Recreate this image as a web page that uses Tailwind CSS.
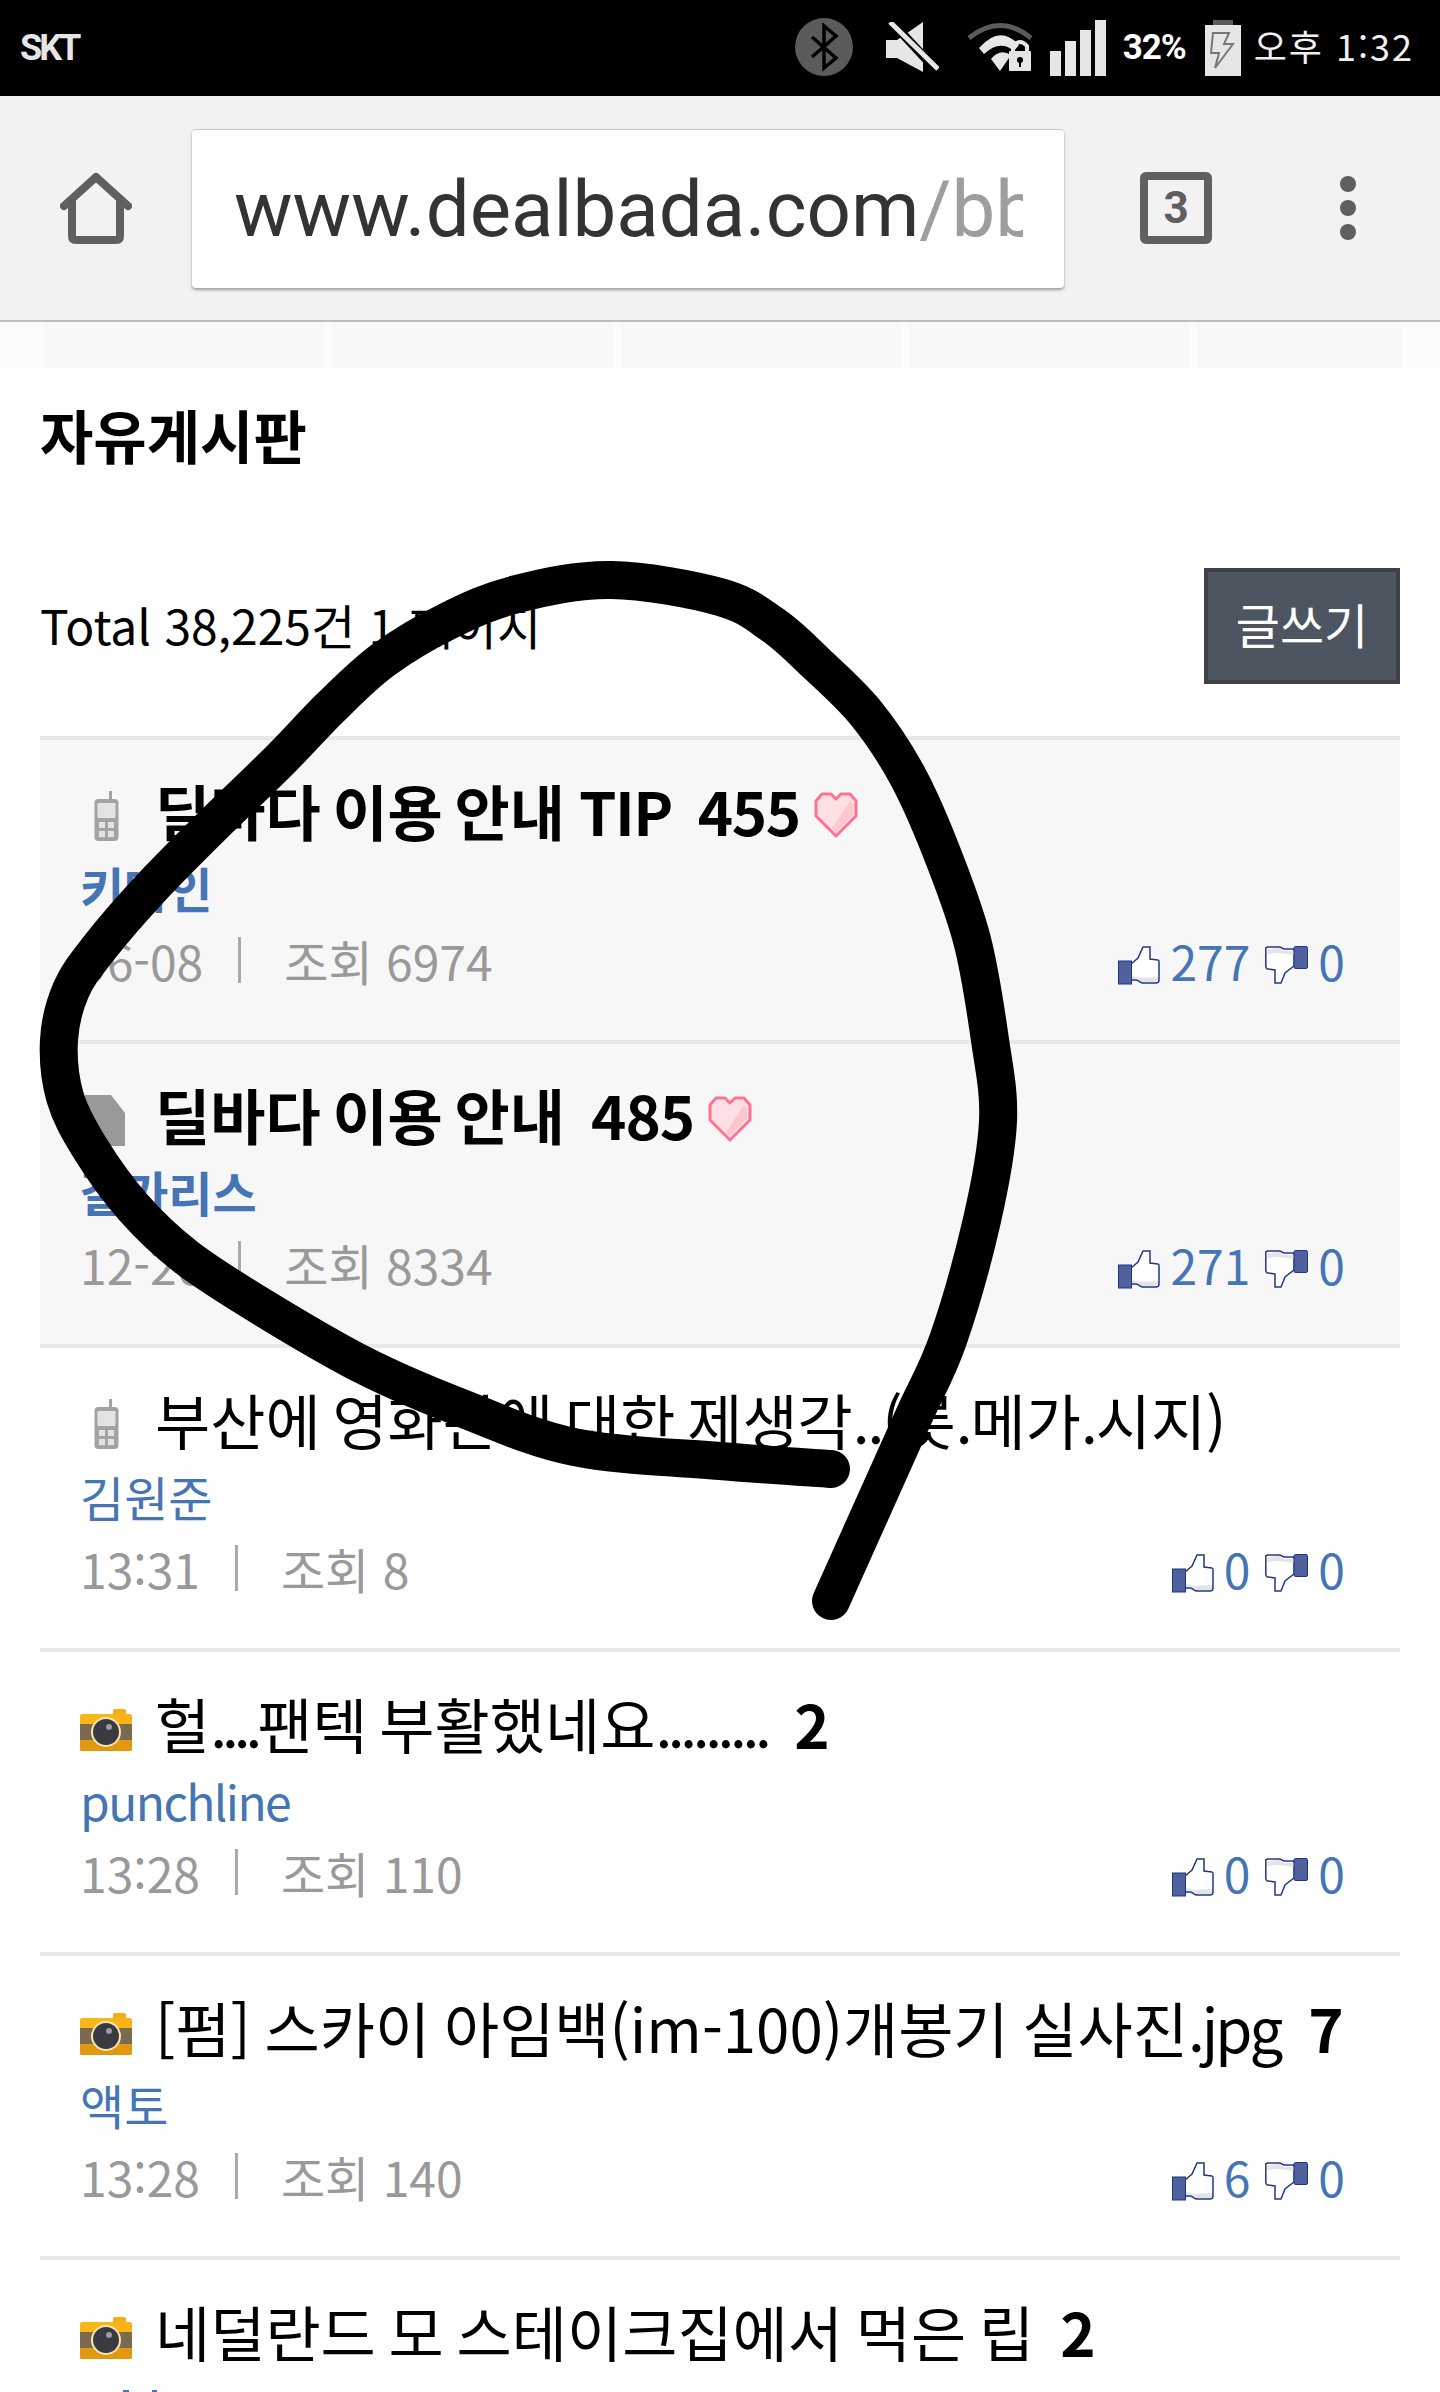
<!DOCTYPE html>
<html lang="ko">
<head>
    <meta charset="UTF-8">
    <meta name="viewport" content="width=device-width, initial-scale=1.0">
    <title>자유게시판</title>
    <script src="https://cdn.jsdelivr.net/npm/@tailwindcss/browser@4"></script>
</head>
<body class="bg-white h-screen overflow-hidden font-['Noto_Sans_CJK_KR',sans-serif]">
    <!-- Shared icons -->
    <svg class="hidden">
        <symbol id="thumb-up" viewBox="0 0 42 39">
            <path d="M13 18 L20 12 L25 1 L32 1 L32 13 L40 14 Q41 14 41 16 L41 34 Q41 37 38 37 L24 37 L19 34 L13 34 Z" fill="#fff" stroke="#1f3a80" stroke-width="1.5"/>
            <path d="M14 30 L22 32 L40 31 L40 34 Q40 36 38 36 L24 36 L19 33 L14 33 Z" fill="#e2e4e8"/>
            <rect x="0.5" y="15" width="13" height="23" fill="#4f619c" stroke="#22357f"/>
        </symbol>
        <symbol id="thumb-down" viewBox="0 0 43 39">
            <path d="M29 3 L19 3 L15 1 L3 1 Q0 1 0.8 4 L0.8 20 Q1 23 3 23 L10 24 L10 37 L16 37 L20 27 L29 20 Z" fill="#fff" stroke="#1f3a80" stroke-width="1.5"/>
            <path d="M2 3 L15 2 L19 5 L29 5 L29 9 L14 7 L2 8 Z" fill="#e2e4e8"/>
            <rect x="29" y="0.5" width="13.5" height="22" rx="1.5" fill="#4f619c" stroke="#22357f"/>
        </symbol>
        <symbol id="camera" viewBox="0 0 52 42">
            <rect x="33" y="0" width="13" height="8" rx="2" fill="#f5ae1a"/>
            <rect x="0" y="5" width="52" height="37" rx="2" fill="#fbb417"/>
            <rect x="0" y="15" width="52" height="16" fill="#7a6a50"/>
            <path d="M0 31 H52 V40 Q52 42 50 42 H2 Q0 42 0 40 Z" fill="#e09a10"/>
            <circle cx="26" cy="23" r="15" fill="#f4e7b8"/>
            <circle cx="26" cy="23" r="13" fill="#3a3a40"/>
            <circle cx="29" cy="18" r="3" fill="#9b9ba0"/>
        </symbol>
        <symbol id="phone" viewBox="0 0 25 50">
            <rect x="15" y="0" width="3" height="10" fill="#a3a3a3"/>
            <rect x="0.5" y="8" width="24" height="42" rx="4" fill="#a3a3a3"/>
            <rect x="3.5" y="12" width="18" height="15" rx="1" fill="#e3e3e3"/>
            <rect x="5" y="31" width="6" height="6" fill="#e3e3e3"/>
            <rect x="14" y="31" width="6" height="6" fill="#e3e3e3"/>
            <rect x="5" y="40" width="6" height="6" fill="#e3e3e3"/>
            <rect x="14" y="40" width="6" height="6" fill="#e3e3e3"/>
        </symbol>
        <symbol id="heart" viewBox="0 0 44 46">
            <path d="M8 2 H17 L22 7 L27 2 H36 L42 9 V24 L22 44 L2 24 V9 Z" fill="#fde0e3" stroke="#ff7391" stroke-width="3" stroke-linejoin="round"/>
            <path d="M36 9 L39 12 V23 L22 40 L18 36 Z" fill="#fcc7cc"/>
        </symbol>
    </svg>

    <!-- Status bar -->
    <div class="h-24 bg-black flex items-center justify-between pl-[20px] pr-[26px]">
        <span class="text-[36px] font-bold text-[#e6e6e6] tracking-[-3px] font-['Roboto']">SKT</span>
        <div class="flex items-center">
            <svg width="58" height="58" viewBox="0 0 58 58" class="mt-[-2px]">
                <ellipse cx="29" cy="29" rx="29" ry="29" fill="#5b5b5b"/>
                <path d="M17 19 L41 40 L29 50 V8 L41 18 L17 39" fill="none" stroke="#000" stroke-width="3.5"/>
            </svg>
            <svg width="53" height="50" viewBox="0 0 53 50" class="ml-[33px] mt-[-2px]">
                <path d="M0 18 H11 L37 0 V50 L11 36 H0 Z" fill="#e6e6e6"/>
                <path d="M2 -4 L52 50" stroke="#000" stroke-width="9"/>
                <path d="M4 0 L52 47" stroke="#e6e6e6" stroke-width="5"/>
            </svg>
            <svg width="66" height="52" viewBox="0 0 66 52" class="ml-[28px] mt-[-2px]">
                <path d="M2 17 Q33 -8 64 17" fill="none" stroke="#5b5b5b" stroke-width="5"/>
                <path d="M12 27 Q33 3 52 24 L47 30 Q33 18 17 33 Z" fill="#e6e6e6"/>
                <path d="M24 38 Q33 27 44 34 L33 50 Z" fill="#e6e6e6"/>
                <rect x="42" y="30" width="22" height="20" rx="1" fill="#e6e6e6"/>
                <path d="M46 31 V25 Q53 17 60 25 V31" fill="none" stroke="#e6e6e6" stroke-width="4"/>
                <circle cx="53" cy="39" r="3" fill="#000"/>
                <rect x="52" y="39" width="2" height="7" fill="#000"/>
            </svg>
            <div class="flex items-end gap-[4px] h-14 ml-[17px] mt-[-1px]">
                <div class="w-[11px] h-[25px] bg-[#e6e6e6]"></div>
                <div class="w-[11px] h-[35px] bg-[#e6e6e6]"></div>
                <div class="w-[11px] h-[46px] bg-[#e6e6e6]"></div>
                <div class="w-[11px] h-[56px] bg-[#e6e6e6]"></div>
            </div>
            <span class="text-[35px] font-bold text-white ml-[17px] tracking-[-1px] font-['Roboto']">32%</span>
            <svg width="36" height="56" viewBox="0 0 36 56" class="ml-[19px] mt-[-1px]">
                <rect x="8" y="0" width="20" height="7" fill="#5b5b5b"/>
                <rect x="0" y="5" width="36" height="51" fill="#e6e6e6"/>
                <path d="M24 13 L8 13 L6 33 L14 33 L10 48 L28 24 L19 24 Z" fill="#e6e6e6" stroke="#777" stroke-width="2"/>
            </svg>
            <span class="text-[36px] text-[#f0f0f0] ml-[13px] tracking-[2px] pb-[6px]">오후 1:32</span>
        </div>
    </div>

    <!-- Browser toolbar -->
    <div class="h-[226px] bg-[#f2f2f2] flex items-center pl-[60px] border-b-2 border-[#bdbdbd]">
        <svg width="72" height="72" viewBox="0 0 72 72" class="shrink-0">
            <path d="M4 34 L36 5 L68 34 M12 30 V64 Q12 68 16 68 H56 Q60 68 60 64 V30" fill="none" stroke="#5f5f5f" stroke-width="8" stroke-linecap="round" stroke-linejoin="round"/>
        </svg>
        <div class="w-[872px] h-[159px] ml-[60px] bg-white rounded-[4px] border-t border-[#c9c9c9] shadow-[0_2px_3px_rgba(0,0,0,0.35)] flex items-center pl-[42px] pr-[41px]">
            <div class="overflow-hidden whitespace-nowrap text-[78px] text-[#333] font-['Roboto'] mt-[2px]">www.dealbada.com<span class="text-[#9e9e9e]">/bbs</span></div>
        </div>
        <div class="w-[72px] h-[72px] ml-[76px] border-[8px] border-[#5f5f5f] rounded-[6px] flex items-center justify-center text-[44px] font-bold text-[#5f5f5f] font-['Roboto']">3</div>
        <div class="flex flex-col gap-[8px] ml-[128px]">
            <div class="w-4 h-4 rounded-full bg-[#5f5f5f]"></div>
            <div class="w-4 h-4 rounded-full bg-[#5f5f5f]"></div>
            <div class="w-4 h-4 rounded-full bg-[#5f5f5f]"></div>
        </div>
    </div>

    <!-- Page behind toolbar -->
    <div class="h-[46px] bg-[#fcfcfc] flex pl-[44px] gap-[8px]">
        <div class="w-[280px] bg-[#f8f8f8]"></div>
        <div class="w-[281px] bg-[#f8f8f8]"></div>
        <div class="w-[280px] bg-[#f8f8f8]"></div>
        <div class="w-[280px] bg-[#f8f8f8]"></div>
        <div class="w-[204px] bg-[#f8f8f8]"></div>
    </div>

    <main class="px-10">
        <h1 class="h-[78px] mt-[27px] flex items-center text-[58px] font-bold text-black">자유게시판</h1>

        <div class="h-[116px] mt-[95px] flex items-center justify-between">
            <p class="text-[48px] text-black pb-[4px]">Total 38,225건 1 페이지</p>
            <a class="w-[196px] h-[116px] pb-[6px] bg-[#4d5561] border-4 border-[#3f4147] flex items-center justify-center text-[48px] text-white">글쓰기</a>
        </div>

        <div class="mt-[52px]">
            <!-- Pinned -->
            <div class="h-[304px] border-t-4 border-[#e8e8e8] bg-[#f7f7f7] pt-[34px] pl-[40px] pr-[55px]">
                <div class="h-[76px] pb-[4px] flex items-center whitespace-nowrap text-[60px] font-bold text-black [word-spacing:-5px]">
                    <div class="w-[75px] shrink-0"><svg width="25" height="50" class="ml-[14px] mt-[12px]"><use href="#phone"/></svg></div>
                    딜바다 이용 안내<span class="ml-[14px] tracking-[-1.5px]">TIP</span><span class="ml-[26px] tracking-[-1.5px]">455</span>
                    <svg width="44" height="46" class="ml-[14px] mt-[10px]"><use href="#heart"/></svg>
                </div>
                <div class="h-[76px] pb-[2px] flex items-center text-[48px] font-bold text-[#4575b4]">키따인</div>
                <div class="h-[76px] pb-[9px] flex items-center justify-between text-[48px] text-[#999]">
                    <div class="flex items-center">06-08<span class="ml-[35px] mr-[43px] w-[3px] h-[46px] bg-[#aaa]"></span><span>조회 6974</span></div>
                    <div class="flex items-center text-[#4575b4]">
                        <svg width="42" height="39" class="mt-[12px] mr-[10px]"><use href="#thumb-up"/></svg>277
                        <svg width="43" height="39" class="mt-[12px] ml-[15px] mr-[10px]"><use href="#thumb-down"/></svg>0
                    </div>
                </div>
            </div>
            <div class="h-[304px] border-t-4 border-[#e8e8e8] bg-[#f7f7f7] pt-[34px] pl-[40px] pr-[55px]">
                <div class="h-[76px] pb-[4px] flex items-center whitespace-nowrap text-[60px] font-bold text-black [word-spacing:-5px]">
                    <div class="w-[75px] shrink-0">
                        <svg width="40" height="51" viewBox="0 0 40 51" class="ml-[5px] mt-[12px]"><path d="M0 0 H26 L40 18 V51 H0 Z" fill="#999"/></svg>
                    </div>
                    딜바다 이용 안내<span class="ml-[26px] tracking-[-1px]">485</span>
                    <svg width="44" height="46" class="ml-[14px] mt-[10px]"><use href="#heart"/></svg>
                </div>
                <div class="h-[76px] pb-[2px] flex items-center text-[48px] font-bold text-[#4575b4]">갈가리스</div>
                <div class="h-[76px] pb-[9px] flex items-center justify-between text-[48px] text-[#999]">
                    <div class="flex items-center">12-26<span class="ml-[35px] mr-[43px] w-[3px] h-[46px] bg-[#aaa]"></span><span>조회 8334</span></div>
                    <div class="flex items-center text-[#4575b4]">
                        <svg width="42" height="39" class="mt-[12px] mr-[10px]"><use href="#thumb-up"/></svg>271
                        <svg width="43" height="39" class="mt-[12px] ml-[15px] mr-[10px]"><use href="#thumb-down"/></svg>0
                    </div>
                </div>
            </div>

            <!-- Posts -->
            <div class="h-[304px] border-t-4 border-[#e8e8e8] pt-[34px] pl-[40px] pr-[55px]">
                <div class="h-[76px] pb-[2px] flex items-center whitespace-nowrap text-[60px] text-black [word-spacing:-5px]">
                    <div class="w-[75px] shrink-0"><svg width="25" height="50" class="ml-[14px] mt-[10px]"><use href="#phone"/></svg></div>
                    부산에 영화관에 대한 제생각<span class="tracking-[-2px]">..(</span>롯<span class="tracking-[-2px]">.</span>메가<span class="tracking-[-2px]">.</span>시지)
                </div>
                <div class="h-[76px] flex items-center text-[48px] text-[#4575b4]">김원준</div>
                <div class="h-[76px] pb-[9px] flex items-center justify-between text-[48px] text-[#999]">
                    <div class="flex items-center">13:31<span class="ml-[35px] mr-[43px] w-[3px] h-[46px] bg-[#aaa]"></span><span>조회 8</span></div>
                    <div class="flex items-center text-[#4575b4]">
                        <svg width="42" height="39" class="mt-[12px] mr-[10px]"><use href="#thumb-up"/></svg>0
                        <svg width="43" height="39" class="mt-[12px] ml-[15px] mr-[10px]"><use href="#thumb-down"/></svg>0
                    </div>
                </div>
            </div>
            <div class="h-[304px] border-t-4 border-[#e8e8e8] pt-[34px] pl-[40px] pr-[55px]">
                <div class="h-[76px] pb-[2px] flex items-center whitespace-nowrap text-[60px] text-black [word-spacing:-5px]">
                    <div class="w-[75px] shrink-0"><svg width="52" height="42" class="mt-[14px]"><use href="#camera"/></svg></div>
                    헐<span class="tracking-[-5px]">....</span>팬텍 부활했네요<span class="tracking-[-4.3px]">.........</span><span class="ml-[27px] font-bold">2</span>
                </div>
                <div class="h-[76px] flex items-center text-[48px] tracking-[-1.6px] text-[#4575b4]">punchline</div>
                <div class="h-[76px] pb-[9px] flex items-center justify-between text-[48px] text-[#999]">
                    <div class="flex items-center">13:28<span class="ml-[35px] mr-[43px] w-[3px] h-[46px] bg-[#aaa]"></span><span>조회 110</span></div>
                    <div class="flex items-center text-[#4575b4]">
                        <svg width="42" height="39" class="mt-[12px] mr-[10px]"><use href="#thumb-up"/></svg>0
                        <svg width="43" height="39" class="mt-[12px] ml-[15px] mr-[10px]"><use href="#thumb-down"/></svg>0
                    </div>
                </div>
            </div>
            <div class="h-[304px] border-t-4 border-[#e8e8e8] pt-[34px] pl-[40px] pr-[55px]">
                <div class="h-[76px] pb-[2px] flex items-center whitespace-nowrap text-[60px] text-black [word-spacing:-3px]">
                    <div class="w-[75px] shrink-0"><svg width="52" height="42" class="mt-[14px]"><use href="#camera"/></svg></div>
                    [펌] 스카이 아임백(im-100)개봉기 실사진<span class="tracking-[-3px]">.jpg</span><span class="ml-[28px] font-bold">7</span>
                </div>
                <div class="h-[76px] flex items-center text-[48px] text-[#4575b4]">액토</div>
                <div class="h-[76px] pb-[9px] flex items-center justify-between text-[48px] text-[#999]">
                    <div class="flex items-center">13:28<span class="ml-[35px] mr-[43px] w-[3px] h-[46px] bg-[#aaa]"></span><span>조회 140</span></div>
                    <div class="flex items-center text-[#4575b4]">
                        <svg width="42" height="39" class="mt-[12px] mr-[10px]"><use href="#thumb-up"/></svg>6
                        <svg width="43" height="39" class="mt-[12px] ml-[15px] mr-[10px]"><use href="#thumb-down"/></svg>0
                    </div>
                </div>
            </div>
            <div class="h-[136px] border-t-4 border-[#e8e8e8] pt-[34px] pl-[40px] pr-[55px]">
                <div class="h-[76px] pb-[2px] flex items-center whitespace-nowrap text-[60px] text-black [word-spacing:-4px]">
                    <div class="w-[75px] shrink-0"><svg width="52" height="42" class="mt-[14px]"><use href="#camera"/></svg></div>
                    네덜란드 모 스테이크집에서 먹은 립<span class="ml-[26px] font-bold">2</span>
                </div>
                <!-- tops of the next line, cut by the frame -->
                <div class="flex mt-[20px]">
                    <div class="w-[6px] h-[2px] ml-[43px] bg-[#4575b4]"></div>
                    <div class="w-[5px] h-[2px] ml-[23px] bg-[#4575b4]"></div>
                </div>
            </div>
        </div>
    </main>

    <!-- Hand-drawn scribble over the page -->
    <svg width="1440" height="2392" class="absolute top-0 left-0 pointer-events-none">
        <path id="scribble" fill="none" stroke="#000" stroke-width="38" stroke-linecap="round" stroke-linejoin="round"/>
    </svg>

    <script>
        // Smooth the scribble through its sampled points (catmull-rom)
        const pts = [[831,1601],[865,1525],[913,1418],[948,1340],[982,1220],[998,1121],[990,1040],[972,940],[940,848],[906,773],[865,712],[816,663],[773,625],[720,597],[611,580],[517,594],[448,621],[383,660],[331,707],[280,760],[211,827],[149,890],[99,948],[71,990],[59,1040],[65,1097],[90,1148],[133,1207],[186,1257],[262,1307],[363,1365],[459,1407],[574,1447],[720,1461],[831,1469]];
        let d = `M${pts[0]}`;
        for (let i = 0; i < pts.length - 1; i++) {
            const p0 = pts[i - 1] || pts[i], p1 = pts[i], p2 = pts[i + 1], p3 = pts[i + 2] || p2;
            d += ` C${p1[0] + (p2[0] - p0[0]) / 6} ${p1[1] + (p2[1] - p0[1]) / 6} ${p2[0] - (p3[0] - p1[0]) / 6} ${p2[1] - (p3[1] - p1[1]) / 6} ${p2[0]} ${p2[1]}`;
        }
        document.getElementById('scribble').setAttribute('d', d);
    </script>
</body>
</html>
